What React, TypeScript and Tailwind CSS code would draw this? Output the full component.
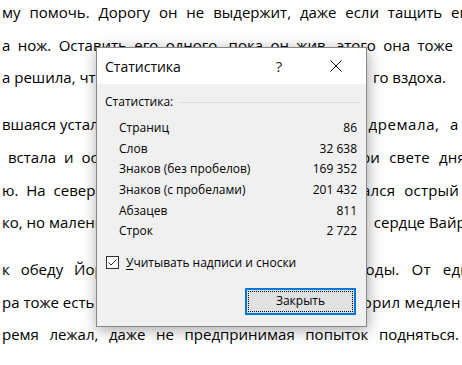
export default function App() {
  return (
    <div className="relative h-[365px] w-[462px] overflow-hidden bg-white font-['Open_Sans',sans-serif] text-black">
      {/* document text behind the dialog */}
      <div className="-mt-[4px] pl-[2px] text-[15px] leading-[32.7px]">
        <div>
          <div className="w-[473px] whitespace-nowrap [text-align-last:justify]">
            му помочь. Дорогу он не выдержит, даже если тащить его
          </div>
          <div className="w-[451px] whitespace-nowrap [text-align-last:justify]">
            а нож. Оставить его одного, пока он жив, этого она тоже
          </div>
          <div className="flex w-[444px] justify-between whitespace-nowrap">
            <span>а решила, что останется</span>
            <span>го вздоха.</span>
          </div>
        </div>
        <div className="mt-[14px]">
          <div className="flex w-[457px] justify-between whitespace-nowrap">
            <span>вшаяся усталость</span>
            <span className="tracking-[0.6px] [word-spacing:6px]">дремала, а</span>
          </div>
          <div className="flex w-[464px] justify-between whitespace-nowrap">
            <span className="ml-[6px] [word-spacing:4px]">встала и осмотрелась</span>
            <span className="tracking-[0.2px] [word-spacing:5px]">при свете дня</span>
          </div>
          <div className="flex w-[457px] justify-between whitespace-nowrap">
            <span className="[word-spacing:4px]">ю. На севере</span>
            <span className="tracking-[0.2px] [word-spacing:5px]">раздавался острый</span>
          </div>
          <div className="flex w-[472px] justify-between whitespace-nowrap">
            <span>ко, но маленькое</span>
            <span>сердце Вайра</span>
          </div>
        </div>
        <div className="mt-[14px]">
          <div className="flex w-[470px] justify-between whitespace-nowrap">
            <span className="[word-spacing:7px]">к обеду Йорк</span>
            <span className="tracking-[0.2px] [word-spacing:8px]">воды. От еды</span>
          </div>
          <div className="flex w-[478px] justify-between whitespace-nowrap">
            <span>ра тоже есть</span>
            <span className="tracking-[0.3px]">говорил медленно</span>
          </div>
          <div className="w-[457px] whitespace-nowrap [text-align-last:justify]">
            ремя лежал, даже не предпринимая попыток подняться.
          </div>
        </div>
      </div>

      {/* statistics dialog */}
      <div className="absolute left-[96px] top-[47px] flex h-[280px] w-[271px] flex-col border border-[#868686] bg-[#f0f0f0] shadow-[1px_3px_14px_rgba(0,0,0,0.35)]">
        <div className="flex h-[36px] items-center bg-white pl-[8px] pr-[20px]">
          <span className="flex-1 text-[14px]">Статистика</span>
          <span className="w-[20px] text-center text-[15px] text-[#222]">?</span>
          <span className="ml-[37px] flex w-[20px] justify-center">
            <svg width="12" height="12" viewBox="0 0 12 12">
              <path d="M0.5 0.5 L11.5 11.5 M11.5 0.5 L0.5 11.5" stroke="#111" strokeWidth="1" fill="none" />
            </svg>
          </span>
        </div>

        <div className="flex flex-1 flex-col pl-[8px] pr-[6px] pt-[10px] text-[12px]">
          <div className="flex h-[16px] items-center">
            <span>Статистика:</span>
            <div className="ml-[6px] h-px flex-1 bg-[#dcdcdc]" />
          </div>

          <div className="mt-[8px] flex flex-col pl-[14px] pr-[3px]">
            {[
              ["Страниц", "86"],
              ["Слов", "32 638"],
              ["Знаков (без пробелов)", "169 352"],
              ["Знаков (с пробелами)", "201 432"],
              ["Абзацев", "811"],
              ["Строк", "2 722"],
            ].map(([k, v]) => (
              <div key={k} className="flex h-[20.6px] items-center justify-between">
                <span>{k}</span>
                <span>{v}</span>
              </div>
            ))}
          </div>

          <div className="mt-[13px] flex h-[16px] items-center pl-[1px]">
            <div className="flex h-[13px] w-[13px] items-center justify-center border border-[#333] bg-white">
              <svg width="11" height="11" viewBox="0 0 11 11">
                <path d="M1.5 5.5 L4 8 L9.5 2.5" stroke="#222" strokeWidth="1" fill="none" />
              </svg>
            </div>
            <span className="ml-[7px]">
              <span className="underline underline-offset-2">У</span>читывать надписи и сноски
            </span>
          </div>

          <button className="ml-auto mr-[4px] mt-[17px] flex h-[27px] w-[111px] items-center justify-center border-2 border-[#0078d7] bg-[#e1e1e1] text-[12px] outline-1 -outline-offset-[4px] outline-dotted outline-black">
            Закрыть
          </button>
        </div>
      </div>
    </div>
  );
}
